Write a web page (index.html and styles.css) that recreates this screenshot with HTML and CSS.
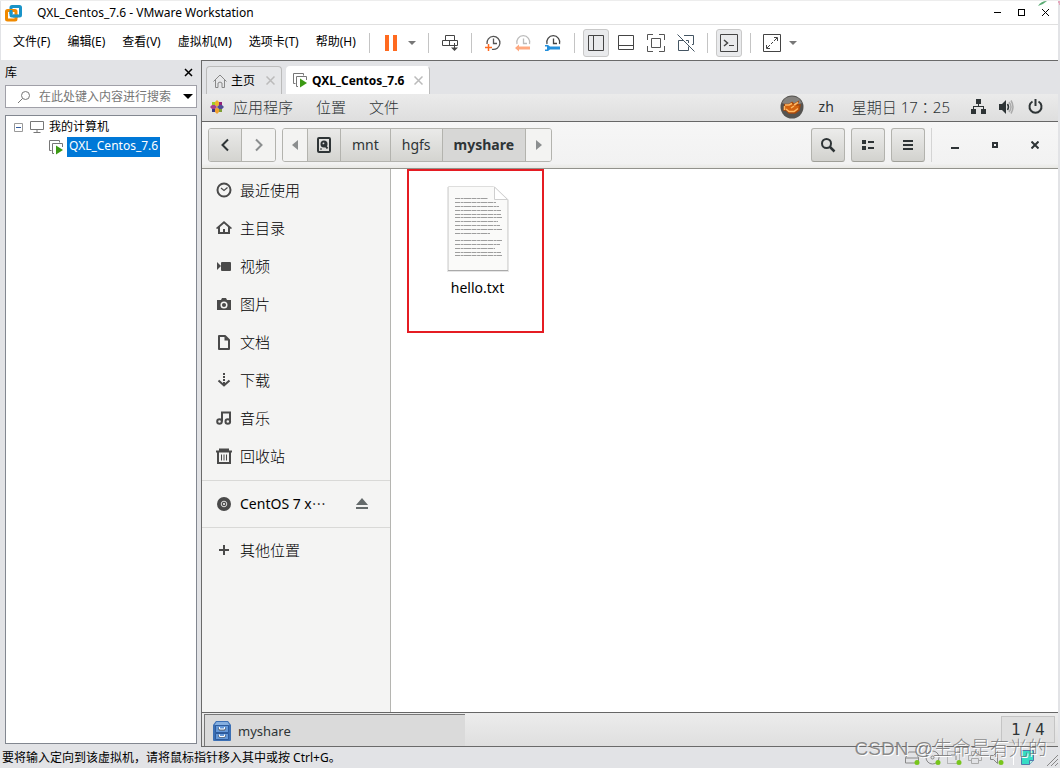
FILE: index.html
```html
<!DOCTYPE html>
<html lang="zh-CN">
<head>
<meta charset="utf-8">
<title>QXL_Centos_7.6 - VMware Workstation</title>
<link rel="stylesheet" href="styles.css">
</head>
<body>
<div class="window">
  <header class="titlebar">
    <svg class="logo" width="18" height="18" viewBox="0 0 18 18" fill="none" stroke-width="3"><rect x="6" y="2.500" width="9.500" height="9.500" rx="1" stroke="#1a94c8"/><rect x="1.500" y="6.500" width="9.500" height="9.500" rx="1" stroke="#f08a00"/><path d="M6 10V6M8 12h5" stroke="#1a94c8"/></svg>
    <h1 class="title">QXL_Centos_7.6 - VMware Workstation</h1>
    <div class="win-controls">
      <button type="button" aria-label="最小化"><svg width="9" height="9" viewBox="0 0 9 9"><path d="M1 4.5h7" stroke="#000"/></svg></button>
      <button type="button" aria-label="最大化"><svg width="9" height="9" viewBox="0 0 9 9"><rect x="1.5" y="1.5" width="6" height="6" fill="none" stroke="#000"/></svg></button>
      <button type="button" aria-label="关闭"><svg width="9" height="9" viewBox="0 0 9 9"><path d="M1 1l7 7M8 1l-7 7" stroke="#000"/></svg></button>
    </div>
    <svg class="leaf" width="23" height="5" viewBox="0 0 23 5"><path d="M0 5Q3 0 9 0Q6 3 0 5z" fill="#59ab73"/><path d="M20 1h3M22 2v2" stroke="#e66b92"/></svg>
  </header>

  <div class="menubar">
    <nav class="menus">
      <button type="button">文件(F)</button><button type="button">编辑(E)</button><button type="button">查看(V)</button><button type="button">虚拟机(M)</button><button type="button">选项卡(T)</button><button type="button">帮助(H)</button>
    </nav>
    <span class="rule"></span>
    <div class="group">
      <button type="button" class="tool pause" aria-label="暂停"><svg width="14" height="18" viewBox="0 0 14 18"><path d="M1 1h4v16h-4zM9 1h4v16h-4z" fill="#ff6a1f"/></svg></button>
      <button type="button" class="drop" aria-label="电源选项"><svg width="8" height="4" viewBox="0 0 8 4"><path d="M0 0h8L4 4z" fill="#777"/></svg></button>
    </div>
    <span class="rule"></span>
    <button type="button" class="tool" aria-label="发送按键"><svg width="18" height="18" viewBox="0 0 18 18" fill="none" stroke="#444"><path d="M4.5 6.500v-5h9v5M1.500 6.500h15v5h-15zM8.500 6.500v5M13.500 9v6" /><path d="M10 13.500h7L13.500 17z" fill="#444" stroke="none"/></svg></button>
    <span class="rule"></span>
    <div class="group snaps">
      <button type="button" class="tool" aria-label="拍摄快照"><svg width="18" height="18" viewBox="0 0 18 18" fill="none" stroke="#555" stroke-width="1.300"><path d="M3 10A6.500 6.500 0 1 1 8 15.300M9.500 4.500V9.500H13"/><path d="M1 13.500h7M4.500 10v7" stroke="#ff6a1f" stroke-width="1.500"/></svg></button>
      <button type="button" class="tool" aria-label="恢复快照"><svg width="18" height="18" viewBox="0 0 18 18" fill="none" stroke="#bbb" stroke-width="1.300"><path d="M3 10A6.500 6.500 0 1 1 15.500 10M9.500 4.500V9.500H13"/><path d="M1 14l4-3.500v2h11v3H5v2z" fill="#ffa980" stroke="none"/></svg></button>
      <button type="button" class="tool" aria-label="管理快照"><svg width="18" height="18" viewBox="0 0 18 18" fill="none" stroke="#444" stroke-width="1.300"><path d="M3 10A6.500 6.500 0 1 1 15.500 10M9.500 4.500V9.500H13"/><path d="M1 11h3l2 1.500h10v3H6L4 17H1v-1.500h2v-3H1z" fill="#2490dc" stroke="none"/></svg></button>
    </div>
    <span class="rule"></span>
    <div class="group views">
      <button type="button" class="tool on" aria-label="显示库"><svg width="18" height="18" viewBox="0 0 18 18" fill="none" stroke="#444"><path d="M1.500 1.500h15v15h-15zM6.500 1.500v15"/></svg></button>
      <button type="button" class="tool" aria-label="缩略图栏"><svg width="18" height="18" viewBox="0 0 18 18" fill="none" stroke="#444"><path d="M1.500 1.500h15v14h-15zM1.500 11.500h15"/></svg></button>
      <button type="button" class="tool" aria-label="全屏"><svg width="18" height="18" viewBox="0 0 18 18" fill="none" stroke="#555"><path d="M.5 6V.5H6M12 .5h5.500V6M17.500 12v5.500H12M6 17.500H.5V12M4.500 4.500h9v9h-9z"/></svg></button>
      <button type="button" class="tool" aria-label="Unity"><svg width="18" height="18" viewBox="0 0 18 18" fill="none" stroke="#445563"><path d="M7 1.500h9.500v9H15M6.500 6.500h-5v10h10v-4M11.500 9V6.500H9M.5.5l17 17"/></svg></button>
    </div>
    <span class="rule"></span>
    <button type="button" class="tool on" aria-label="控制台视图"><svg width="18" height="18" viewBox="0 0 18 18" fill="none" stroke="#444"><path d="M.5.5h17v17H.5zM9 11.500h5"/><path d="M4 6l3.500 3L4 12" stroke-width="1.500"/></svg></button>
    <span class="rule"></span>
    <div class="group">
      <button type="button" class="tool fit" aria-label="拉伸客户机"><svg width="18" height="18" viewBox="0 0 18 18" fill="none" stroke="#444"><path d="M.5.5h17v17H.5zM11 3.500h3.500V7M3.500 11v3.500H7M4 14l3-3M8 10l2-2M11 7l3-3"/></svg></button>
      <button type="button" class="drop" aria-label="拉伸选项"><svg width="8" height="4" viewBox="0 0 8 4"><path d="M0 0h8L4 4z" fill="#777"/></svg></button>
    </div>
  </div>

  <main class="workspace">
    <aside class="library">
      <div class="library-head"><h2>库</h2><button type="button" aria-label="关闭库"><svg width="9" height="9" viewBox="0 0 9 9"><path d="M1 1l7 7M8 1l-7 7" stroke="#000" stroke-width="1.500"/></svg></button></div>
      <div class="search">
        <svg width="14" height="14" viewBox="0 0 14 14" fill="none" stroke="#777"><circle cx="8.500" cy="5.500" r="4"/><path d="M5.500 8.500L1 13"/></svg>
        <input type="text" aria-label="搜索" placeholder="在此处键入内容进行搜索">
        <button type="button" aria-label="搜索选项"><svg width="10" height="5" viewBox="0 0 10 5"><path d="M0 0h10L5 5z"/></svg></button>
      </div>
      <div class="tree">
        <div class="node">
          <svg width="9" height="9" viewBox="0 0 9 9" fill="none"><path d="M.5.5h8v8h-8z" stroke="#999"/><path d="M2 4.500h5" stroke="#315ba0"/></svg>
          <svg width="14" height="12" viewBox="0 0 14 12" fill="none" stroke="#777"><path d="M.5.5h13v8H.5zM7 8.500v3M3.500 11.500h7"/></svg>
          <span>我的计算机</span>
        </div>
        <div class="node child">
          <svg width="15" height="15" viewBox="0 0 15 15" fill="none"><path d="M2.500 10.500h-2V.5h10v2M5 13.500H3.500v-10h10V7" stroke="#777"/><path d="M7 5.500l7 4.500-7 4.500z" fill="#3c9a14"/></svg>
          <span class="picked">QXL_Centos_7.6</span>
        </div>
      </div>
    </aside>

    <section class="machine">
      <div class="tabs">
        <div class="tab home">
          <button type="button"><svg width="14" height="14" viewBox="0 0 14 14" fill="none" stroke="#888"><path d="M.5 7.500L7 1l6.500 6.500M2.500 6v7.500H5V9q2-2 4 0v4.500h2.500V6"/></svg>主页</button>
          <button type="button" class="x" aria-label="关闭主页"><svg width="9" height="9" viewBox="0 0 9 9"><path d="M.5.5l8 8M8.500.5l-8 8" stroke="#bbb" stroke-width="1.500"/></svg></button>
        </div>
        <div class="tab current">
          <button type="button"><svg width="15" height="15" viewBox="0 0 15 15" fill="none"><path d="M2.500 10.500h-2V.5h10v2M5 13.500H3.500v-10h10V7" stroke="#777"/><path d="M7 5.500l7 4.500-7 4.500z" fill="#3c9a14"/></svg>QXL_Centos_7.6</button>
          <button type="button" class="x" aria-label="关闭标签"><svg width="9" height="9" viewBox="0 0 9 9"><path d="M.5.5l8 8M8.500.5l-8 8" stroke="#bbb" stroke-width="1.500"/></svg></button>
        </div>
      </div>

      <div class="guest">
        <div class="panel">
          <button type="button" class="apps"><svg width="14" height="14" viewBox="0 0 14 14"><path d="M7 0l2 2v3L7 7 5 5V2z" fill="#efb42b"/><path d="M7 14l-2-2V9l2-2 2 2v3z" fill="#f0a030"/><path d="M0 7l2-2h3l2 2-2 2H2z" fill="#a5408e"/><path d="M14 7l-2 2H9L7 7l2-2h3z" fill="#4f4d95"/><path d="M2 2h3v3H2z" fill="#9ccd2a"/><path d="M9 2h3v3H9z" fill="#932279"/><path d="M2 9h3v3H2z" fill="#3a3983"/><path d="M9 9h3v3H9z" fill="#7e9e35"/></svg>应用程序</button>
          <button type="button">位置</button>
          <button type="button">文件</button>
          <div class="indicators">
            <svg width="24" height="24" viewBox="0 0 24 24" fill="none"><circle cx="12" cy="12" r="11.500" fill="#555350"/><path d="M2 8a11 11 0 0 1 20 0q-10 5-20 0z" fill="#85827e"/><path d="M5 9.500h4l3-2 2 2 4-2.500-1 3h3l-1 5-4 3H9l-3-3H4z" fill="#d2620f" stroke="#a8480c" stroke-width="1.500"/><path d="M5 10h4l3-1.500M14 10l4-2.500M6 14l3 2.500h5l4-3M11 13l3-2M4.500 11v4" stroke="#ffb863" stroke-width="1.500"/></svg>
            <button type="button" class="lang">zh</button>
            <button type="button" class="clock" lang="zh-TW">星期日 17：25</button>
            <svg width="15" height="15" viewBox="0 0 15 15"><path d="M5 0h5v5H8v2h5v3h2v5h-5v-5h2V8H3v2h2v5H0v-5h2V7h5V5H5z" fill="#2e3436"/></svg>
            <svg class="volume" width="15" height="14" viewBox="0 0 15 14"><path d="M0 4h3l4-4v14L3 10H0z" fill="#2e3436"/><path d="M8.500 4q2 3 0 6" fill="none" stroke="#2e3436" stroke-width="1.500"/><path d="M10 2q4 5 0 10M12 .5q4 6.500 0 13" fill="none" stroke="#aaa" stroke-width="1.500"/></svg>
            <svg width="15" height="15" viewBox="0 0 15 15" fill="none" stroke="#2e3436" stroke-width="2"><path d="M4.500 2.500a6 6 0 1 0 6 0M7.500 0v7"/></svg>
          </div>
        </div>

        <div class="headerbar">
          <div class="linked nav">
            <button type="button" aria-label="后退"><svg width="10" height="14" viewBox="0 0 10 14"><path d="M8 1.500L2.500 7 8 12.500" fill="none" stroke="#2e3436" stroke-width="2"/></svg></button>
            <button type="button" class="flat" aria-label="前进"><svg width="10" height="14" viewBox="0 0 10 14"><path d="M2 1.500L7.500 7 2 12.500" fill="none" stroke="#8b8e8f" stroke-width="2"/></svg></button>
          </div>
          <div class="linked path">
            <button type="button" class="flat arrow" aria-label="向左滚动"><svg width="6" height="10" viewBox="0 0 6 10"><path d="M6 0v10L0 5z" fill="#8b8e8f"/></svg></button>
            <button type="button" class="disk" aria-label="计算机"><svg width="14" height="16" viewBox="0 0 14 16" fill="none" stroke="#2e3436"><rect x="1" y="1" width="12" height="14" rx="1" stroke-width="2"/><circle cx="7" cy="7" r="3.500" fill="#2e3436" stroke="none"/><circle cx="6.500" cy="6.500" r="1" fill="#ddd" stroke="none"/><path d="M7 7l3.500 4.500" stroke-width="2"/><path d="M3 12h2" /></svg></button>
            <button type="button">mnt</button>
            <button type="button">hgfs</button>
            <button type="button" class="active">myshare</button>
            <button type="button" class="flat arrow" aria-label="向右滚动"><svg width="6" height="10" viewBox="0 0 6 10"><path d="M0 0v10l6-5z" fill="#8b8e8f"/></svg></button>
          </div>
          <div class="actions">
            <button type="button" class="square" aria-label="查找"><svg width="16" height="16" viewBox="0 0 16 16" fill="none" stroke="#2e3436" stroke-width="2"><circle cx="6.500" cy="6.500" r="4.500"/><path d="M10 10l4.500 4.500" stroke-width="2.500"/></svg></button>
            <button type="button" class="square" aria-label="列表视图"><svg width="12" height="10" viewBox="0 0 12 10" fill="#2e3436"><path d="M0 0h4v4H0zM6 1h6v2H6zM0 6h4v4H0zM6 7h6v2H6z"/></svg></button>
            <button type="button" class="square" aria-label="菜单"><svg width="10" height="10" viewBox="0 0 10 10" fill="#2e3436"><path d="M0 0h10v2H0zM0 4h10v2H0zM0 8h10v2H0z"/></svg></button>
            <div class="frame-controls">
              <button type="button" aria-label="最小化窗口"><svg width="8" height="8" viewBox="0 0 8 8"><path d="M0 6h8v2H0z" fill="#2e3436"/></svg></button>
              <button type="button" aria-label="最大化窗口"><svg width="6" height="6" viewBox="0 0 6 6"><path d="M1 1h4v4H1z" fill="none" stroke="#2e3436" stroke-width="2"/></svg></button>
              <button type="button" aria-label="关闭窗口"><svg width="8" height="8" viewBox="0 0 8 8"><path d="M.5.5l7 7M7.500.5l-7 7" stroke="#2e3436" stroke-width="2"/></svg></button>
            </div>
          </div>
        </div>

        <div class="files">
          <nav class="places">
            <a href="#recent"><svg width="16" height="16" viewBox="0 0 16 16" fill="none" stroke="#4a4a4a"><circle cx="8" cy="8" r="6.500" stroke-width="2"/><path d="M5 6l3 2.500L11.500 5.500" stroke-width="1.200"/></svg>最近使用</a>
            <a href="#home"><svg width="16" height="16" viewBox="0 0 16 16"><path d="M8 1l8 7-1 1-1-.5V14H2V8.500L1 9 0 8zM4 7v5h3V9h2v3h3V7L8 3.500z" fill="#4a4a4a" fill-rule="evenodd"/></svg>主目录</a>
            <a href="#videos"><svg width="16" height="16" viewBox="0 0 16 16" fill="#4a4a4a"><rect x="5" y="4" width="10" height="9" rx="1"/><path d="M1 4l4 4-4 4z"/></svg>视频</a>
            <a href="#pictures"><svg width="16" height="16" viewBox="0 0 16 16"><path d="M1 4h4l1-2h4l1 2h4v10H1z" fill="#4a4a4a"/><circle cx="8" cy="9" r="2.800" fill="none" stroke="#f4f4f3" stroke-width="1.500"/></svg>图片</a>
            <a href="#documents"><svg width="16" height="16" viewBox="0 0 16 16" fill="none" stroke="#4a4a4a" stroke-width="2"><path d="M3 2h6l4 4v9H3z" stroke-linejoin="round"/><path d="M8.500 2.500v4H13z" fill="#4a4a4a" stroke="none"/></svg>文档</a>
            <a href="#downloads"><svg width="16" height="16" viewBox="0 0 16 16" fill="none" stroke="#4a4a4a" stroke-width="2"><path d="M2.500 8.500L8 13.500l5.500-5"/><path d="M8 1v12" stroke-dasharray="2 1"/></svg>下载</a>
            <a href="#music"><svg width="16" height="16" viewBox="0 0 16 16" fill="none" stroke="#4a4a4a" stroke-width="2"><circle cx="3.500" cy="11.500" r="2.300"/><circle cx="11.800" cy="11.500" r="2.300"/><path d="M6 11.500V2.500h8v9"/></svg>音乐</a>
            <a href="#trash"><svg width="16" height="16" viewBox="0 0 16 16" fill="none" stroke="#4a4a4a" stroke-width="2"><path d="M0 3.500h16M3 1.500h10M2 4v11h12V4"/><path d="M5.500 6.500v6M8 6.500v6M10.500 6.500v6" stroke-width="1"/></svg>回收站</a>
            <div class="device"><a href="#centos"><svg width="16" height="16" viewBox="0 0 16 16"><circle cx="8" cy="8" r="7" fill="#4a4a4a"/><circle cx="8" cy="8" r="2.800" fill="none" stroke="#ddd"/><circle cx="8" cy="8" r="1" fill="#fff"/></svg>CentOS 7 x⋯</a><button type="button" aria-label="弹出"><svg width="12" height="12" viewBox="0 0 12 12" fill="#656b6c"><path d="M6 0l6 7H0zM0 9h12v2H0z"/></svg></button></div>
            <a href="#other"><svg width="16" height="16" viewBox="0 0 16 16"><path d="M8 3v10M3 8h10" stroke="#4a4a4a" stroke-width="2"/></svg>其他位置</a>
          </nav>
          <div class="folder">
            <figure class="file">
              <svg class="sheet" width="64" height="88" viewBox="0 0 64 88">
                <path d="M1 2h48l14 13v72H1z" fill="#999" opacity=".25"/>
                <path d="M2.500 1.500h45l14 13v71h-59z" fill="#fafaf9" stroke="#dededd"/>
                <path d="M2 85.500h60" stroke="#aaa"/>
                <path d="M48.500 2v12.500h13z" fill="#fff" stroke="#cfcfcf"/>
                <g stroke="#888" stroke-width="1" stroke-dasharray="5 .6 3 .4 7 .5" opacity=".8"><path d="M9 13.500h33M9 17.500h41M9 21.500h44M9 25.500h46M9 29.500h46M9 32.500h47M9 36.500h43M9 40.500h45M9 44.500h47M9 48.500h35M9 55.500h47M9 59.500h45M9 63.500h40M9 67.500h46M9 70.500h47"/></g>
              </svg>
              <figcaption>hello.txt</figcaption>
            </figure>
          </div>
        </div>

        <div class="taskbar">
          <button type="button" class="task"><svg width="18" height="22" viewBox="0 0 18 22"><path d="M3 1h12l3 4v15q0 1-1 1H1q-1 0-1-1V5z" fill="#3c70b5"/><path d="M3.500 2h11l2 3h-15z" fill="#85afe0"/><path d="M2.500 5.500h13v7h-13zM2.500 13.500h13v6h-13z" fill="#6498d8" stroke="#2d5b9c"/><path d="M6 7.500v2.500h6V7.500M6 15v2h6v-2" fill="none" stroke="#555"/><path d="M6.500 7v2h5V7M6.500 14.500v2h5v-2" fill="none" stroke="#fff"/></svg>myshare</button>
          <button type="button" class="pager">1 / 4</button>
        </div>
      </div>
    </section>
  </main>

  <footer class="status">
    <p>要将输入定向到该虚拟机，请将鼠标指针移入其中或按 Ctrl+G。</p>
    <div class="devices">
      <svg width="16" height="16" viewBox="0 0 16 16" fill="none" stroke="#888"><path d="M1.500 8l3-6h8l2 6v5h-13zM1.500 8h13"/><circle cx="13" cy="12.500" r="2.500" fill="#78c51c" stroke="none"/></svg>
      <svg width="16" height="16" viewBox="0 0 16 16" fill="none" stroke="#888"><circle cx="7.500" cy="7.500" r="6.500"/><circle cx="7.500" cy="7.500" r="1.500"/><circle cx="13" cy="12.500" r="2.500" fill="#78c51c" stroke="none"/></svg>
      <svg width="16" height="16" viewBox="0 0 16 16" fill="none" stroke="#888"><path d="M1.500 1.500h12v12h-12z" stroke-dasharray="1 1"/><path d="M5 5h5v5"/><circle cx="13" cy="12.500" r="2.500" fill="#78c51c" stroke="none"/></svg>
      <svg width="16" height="16" viewBox="0 0 16 16" fill="none" stroke="#aaa"><path d="M4.500 5V1.500h7V5M4 10.500H1.500v-5h13v5H12M4.500 8.500h7v5h-7z"/></svg>
      <svg width="16" height="16" viewBox="0 0 16 16" fill="none" stroke="#888"><path d="M2.500 5.500h3l4-4v12l-4-4h-3z"/><circle cx="13" cy="12.500" r="2.500" fill="#78c51c" stroke="none"/></svg>
      <span class="bar"></span>
      <svg width="16" height="16" viewBox="0 0 16 16"><path d="M2.500.5h12v10l-4 4h-8z" fill="#36dcc5" stroke="#57a"/><path d="M10.500 14.500v-4h4" fill="#b6f4e8" stroke="#57a"/></svg>
      <svg class="grip" width="12" height="12" viewBox="0 0 12 12"><path d="M1 12L12 1M5 12l7-7M9 12l3-3" stroke="#888"/></svg>
    </div>
  </footer>
  <span class="watermark">CSDN @生命是有光的</span>
</div>
</body>
</html>
```

FILE: styles.css
```css
* { box-sizing: border-box; }
body { margin: 0; font: 12px/16px "Noto Sans", "Noto Sans CJK SC", sans-serif; color: #000; }
button { border: 0; background: none; padding: 0; font: inherit; color: inherit; display: inline-flex; align-items: center; justify-content: center; white-space: nowrap; }
svg { display: block; flex: none; }
h1, h2, p, figure { margin: 0; font: inherit; }
a { color: inherit; text-decoration: none; }

.window { position: relative; display: flex; flex-direction: column; height: 100vh; background: #e2e3e6; padding: 0 2px 0 1px; border-top: 1px solid #ededed; }

.titlebar { position: relative; display: flex; align-items: center; height: 24px; padding: 0 8px 0 4px; background: #fff; border-bottom: 1px solid #e0e0e0; flex: none; }
.title { margin-left: 14px; }
.win-controls { display: flex; gap: 15px; margin-left: auto; }
.leaf { position: absolute; right: -3px; top: 0; }

.menubar { display: flex; align-items: center; height: 35px; background: #fff; padding-left: 12px; flex: none; }
.menus { display: flex; gap: 17px; margin-right: 13px; }
.menus button { padding-bottom: 2px; }
.rule { width: 1px; height: 20px; background: #c4c4c4; }
.group { display: flex; align-items: center; }
.tool { width: 26px; height: 28px; margin: 0 8px; border-radius: 3px; }
.tool.on { background: #e9eaec; border: 1px solid #c9c9c9; }
.snaps .tool { margin: 0 2px; }
.snaps { padding: 0 6px; }
.views { gap: 4px; padding: 0 8px; }
.views .tool { margin: 0; }
.pause { margin-right: 4px; }
.drop { margin-right: 12px; }
.fit { margin-right: 4px; }
.menubar > .tool.on { margin: 0 8px; }

.workspace { display: flex; flex: 1; min-height: 0; }
.library { width: 200px; flex: none; display: flex; flex-direction: column; padding: 0 4px 3px; }
.library-head { display: flex; justify-content: space-between; align-items: center; height: 25px; padding-right: 4px; }
.search { display: flex; align-items: center; height: 23px; padding: 0 3px 0 11px; background: #fff; border: 1px solid #a0a0a8; }
.search input { flex: 1; min-width: 0; border: 0; padding: 0; margin-left: 8px; background: none; font: inherit; outline: 0; }
.search input::placeholder { color: #767676; opacity: 1; }
.tree { flex: 1; margin-top: 7px; padding: 1px 0 0 8px; background: #fff; border: 1px solid #828790; }
.node { display: flex; align-items: center; height: 20px; }
.node svg + svg { margin-left: 7px; }
.node span { margin-left: 5px; }
.child { padding-left: 35px; }
.node .picked { margin-left: 3px; padding: 1px 2px 3px; background: #0078d7; color: #fff; }

.machine { flex: 1; min-width: 0; display: flex; flex-direction: column; border: solid #6a6a6a; border-width: 1px 0 1px 1px; }
.tabs { display: flex; align-items: flex-end; gap: 4px; height: 33px; padding-left: 4px; flex: none; }
.tab { display: flex; align-items: center; height: 28px; padding: 0 6px; border: 1px solid #bbb; border-bottom: 0; border-radius: 4px 4px 0 0; background: #e6e7e9; }
.tab svg { margin-right: 4px; }
.tab .x { margin-left: 11px; }
.tab .x svg { margin: 0; }
.current { background: #fff; font-weight: 700; border-color: #fff #bbb #fff #fff; }
.current .x { margin-left: 10px; }

.guest { flex: 1; min-height: 0; display: flex; flex-direction: column; font-size: 14px; line-height: 20px; }
.panel { display: flex; align-items: center; height: 28px; padding: 0 15px 2px 8px; background: linear-gradient(#ebebeb, #dedede); border-bottom: 1px solid #666; color: #2e3436; font-size: 15px; font-weight: 300; gap: 23px; flex: none; }
.apps { gap: 9px; }
.indicators { display: flex; align-items: center; margin-left: auto; }
.lang { margin: 0 18px 0 15px; font-size: 14px; font-weight: 400; }
.clock { margin-right: 21px; font-family: "Noto Sans", "Noto Sans CJK TC", sans-serif; }
.volume { margin: 0 14px 0 13px; }

.headerbar { display: flex; align-items: center; height: 47px; padding: 0 3px 0 6px; background: linear-gradient(#f6f6f6, #f2f2f2 90%, #e8e8e4); border-bottom: 1px solid #92928c; gap: 6px; flex: none; color: #2e3436; }
.linked { display: flex; height: 34px; border: 1px solid #b3b3ae; border-radius: 3px; overflow: hidden; }
.linked button { background: linear-gradient(#eaeae9, #d4d4d0); border-right: 1px solid #b3b3ae; padding: 0 11px; }
.linked button:last-child { border-right: 0; }
.linked .flat { background: #f3f3f2; }
.linked .active { background: #d7d7d6; font-weight: 700; }
.nav button, .path .disk { width: 33px; padding: 0; }
.path .arrow { width: 25px; padding: 0; }
.actions { display: flex; align-items: center; gap: 6px; margin-left: auto; }
.square { width: 34px; height: 34px; border: 1px solid #b3b3ae; border-bottom-color: #9f9f98; border-radius: 3px; background: linear-gradient(#ececeb, #d2d2ce); }
.frame-controls { display: flex; height: 34px; border-left: 1px solid #d4d4d4; padding-left: 3px; }
.frame-controls button { width: 40px; }

.files { display: flex; flex: 1; min-height: 0; }
.places { width: 188px; flex: none; display: flex; flex-direction: column; padding-top: 2px; background: #f4f4f3; border-right: 1px solid #b5b5b1; box-sizing: content-box; font-size: 15px; font-weight: 300; }
.places a { display: flex; align-items: center; gap: 8px; height: 38px; padding-left: 14px; }
.device { display: flex; align-items: center; justify-content: space-between; height: 48px; margin: 5px 0 3px; padding-right: 22px; border: solid #d9d9d7; border-width: 1px 0; font-size: 14px; font-weight: 400; }
.folder { flex: 1; background: #fff; padding-left: 16px; }
.file { width: 137px; height: 164px; padding: 14px 0 0 4px; border: 2px solid #e51c23; display: flex; flex-direction: column; align-items: center; }
.file figcaption { margin-top: 5px; }

.taskbar { display: flex; justify-content: space-between; align-items: flex-start; height: 34px; padding: 1px 3px 0 2px; border-top: 1px solid #666; background: linear-gradient(#ececec, #dfdfdf); color: #2e3436; flex: none; }
.task { width: 261px; height: 32px; justify-content: flex-start; gap: 7px; padding-left: 8px; background: #dadada; border: solid #777; border-width: 1px 0 0 1px; font-size: 13px; }
.pager { width: 54px; height: 27px; margin-top: 2px; border: 1px solid #c4c4c4; background: #dfdfdf; font: 15px/16px "DejaVu Sans", sans-serif; }

.status { display: flex; align-items: center; justify-content: space-between; height: 21px; padding: 1px 0 0 1px; flex: none; }
.devices { display: flex; align-items: center; gap: 5px; }
.bar { width: 1px; height: 14px; background: #fff; margin-left: 4px; }
.grip { margin-left: 6px; align-self: flex-end; }
.watermark { position: absolute; right: 13px; bottom: 9px; font: 19px/20px "Liberation Sans", "Noto Sans CJK SC", sans-serif; font-weight: 300; color: rgba(110, 110, 110, .8); text-shadow: 1px 1px 0 #fff; white-space: nowrap; }
```
